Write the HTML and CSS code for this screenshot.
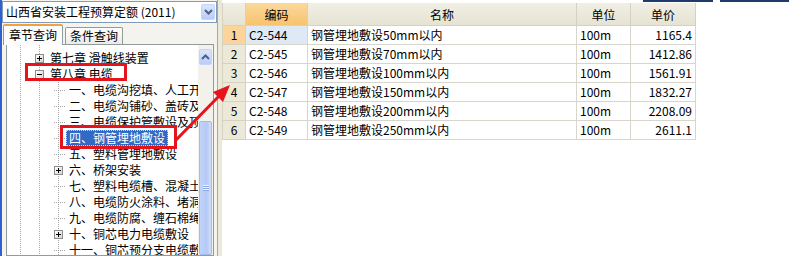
FILE: index.html
```html
<!DOCTYPE html>
<html lang="zh-CN">
<head>
    <meta charset="UTF-8">
    <title>定额查询</title>
    <link rel="stylesheet" href="styles.css">
</head>
<body>
    <div class="app">
        <!-- 左侧：定额库 + 章节树 -->
        <div class="left">
            <div class="combo">
                <span class="combo-text">山西省安装工程预算定额 (2011)</span>
                <span class="combo-btn">
                    <svg width="9" height="6" viewBox="0 0 9 6"><path d="M1 1 L4.5 4.5 L8 1" fill="none" stroke="#4d6185" stroke-width="2"/></svg>
                </span>
            </div>

            <div class="tabs">
                <div class="tab active">章节查询</div>
                <div class="tab">条件查询</div>
            </div>

            <div class="tree-box">
                <div class="tree">
                    <div class="node lv1"><span class="exp plus"></span><span class="label">第七章 滑触线装置</span></div>
                    <div class="node lv1"><span class="exp minus"></span><span class="label">第八章 电缆</span></div>
                    <div class="children">
                        <div class="node lv2"><span class="stub"></span><span class="label">一、电缆沟挖填、人工开挖路面</span></div>
                        <div class="node lv2"><span class="stub"></span><span class="label">二、电缆沟铺砂、盖砖及移动盖板</span></div>
                        <div class="node lv2"><span class="stub"></span><span class="label">三、电缆保护管敷设及顶管</span></div>
                        <div class="node lv2"><span class="stub"></span><span class="label selected">四、钢管埋地敷设</span></div>
                        <div class="node lv2"><span class="stub"></span><span class="label">五、塑料管埋地敷设</span></div>
                        <div class="node lv2"><span class="exp plus"></span><span class="label">六、桥架安装</span></div>
                        <div class="node lv2"><span class="stub"></span><span class="label">七、塑料电缆槽、混凝土电缆槽安装</span></div>
                        <div class="node lv2"><span class="stub"></span><span class="label">八、电缆防火涂料、堵洞</span></div>
                        <div class="node lv2"><span class="stub"></span><span class="label">九、电缆防腐、缠石棉绳</span></div>
                        <div class="node lv2"><span class="exp plus"></span><span class="label">十、铜芯电力电缆敷设</span></div>
                        <div class="node lv2"><span class="stub"></span><span class="label">十一、铜芯预分支电缆敷设</span></div>
                    </div>
                </div>
                <div class="vscroll">
                    <span class="sb-up">
                        <svg width="9" height="6" viewBox="0 0 9 6"><path d="M1 5 L4.5 1.5 L8 5" fill="none" stroke="#4d6185" stroke-width="2"/></svg>
                    </span>
                    <span class="sb-track"></span>
                    <span class="sb-thumb"><span class="grip"></span></span>
                </div>
            </div>
        </div>

        <div class="splitter"></div>

        <!-- 右侧：定额子目 -->
        <div class="main">
            <div class="top-edge">
                <span class="edge-a"></span>
                <span class="edge-b"></span>
            </div>
            <table class="grid">
                <colgroup>
                    <col class="c-no"><col class="c-code"><col class="c-name"><col class="c-unit"><col class="c-price">
                </colgroup>
                <thead>
                    <tr>
                        <th></th>
                        <th class="hot">编码</th>
                        <th>名称</th>
                        <th>单位</th>
                        <th>单价</th>
                    </tr>
                </thead>
                <tbody>
                    <tr><td class="no hot">1</td><td class="cur">C2-544</td><td>钢管埋地敷设50mm以内</td><td>100m</td><td class="num">1165.4</td></tr>
                    <tr><td class="no">2</td><td>C2-545</td><td>钢管埋地敷设70mm以内</td><td>100m</td><td class="num">1412.86</td></tr>
                    <tr><td class="no">3</td><td>C2-546</td><td>钢管埋地敷设100mm以内</td><td>100m</td><td class="num">1561.91</td></tr>
                    <tr><td class="no">4</td><td>C2-547</td><td>钢管埋地敷设150mm以内</td><td>100m</td><td class="num">1832.27</td></tr>
                    <tr><td class="no">5</td><td>C2-548</td><td>钢管埋地敷设200mm以内</td><td>100m</td><td class="num">2208.09</td></tr>
                    <tr><td class="no">6</td><td>C2-549</td><td>钢管埋地敷设250mm以内</td><td>100m</td><td class="num">2611.1</td></tr>
                </tbody>
            </table>
        </div>

        <!-- 标注：红框和箭头 -->
        <div class="mark mark-chapter"></div>
        <div class="mark mark-item"></div>
        <svg class="arrow" width="789" height="256" viewBox="0 0 789 256">
            <line x1="176" y1="140" x2="222" y2="93" stroke="#e5131c" stroke-width="3"/>
            <polygon points="230,85 213,92 223,102" fill="#e5131c"/>
        </svg>
    </div>
</body>
</html>
```

FILE: styles.css
```css
body {
    margin: 0;
    font-family: "Noto Sans CJK SC", "Liberation Sans", sans-serif;
    font-size: 12px;
    color: #000;
    background: #fff;
}

.app {
    position: relative;
    display: flex;
    width: 789px;
    height: 256px;
    overflow: hidden;
}

/* ---------- 左侧 ---------- */

.left {
    width: 215px;
    border-left: 2px solid #2f5fd0;
    background: #f4f3ee;
    display: flex;
    flex-direction: column;
}

.combo {
    height: 20px;
    margin-top: 1px;
    border: 1px solid #7f9db9;
    background: #fff;
    display: flex;
    align-items: center;
    justify-content: space-between;
    padding-left: 3px;
}

.combo-text {
    line-height: 16px;
    white-space: nowrap;
}

.combo-btn,
.sb-up {
    width: 14px;
    height: 16px;
    margin-right: 1px;
    border: 1px solid #c3d3fd;
    border-radius: 2px;
    background: linear-gradient(#dbe6fd, #b9cdf8);
    display: flex;
    align-items: center;
    justify-content: center;
    box-sizing: border-box;
}

.tabs {
    height: 21px;
    display: flex;
    align-items: flex-end;
    padding-left: 1px;
}

.tab {
    height: 16px;
    line-height: 16px;
    padding: 0 4px;
    margin-right: 2px;
    border: 1px solid #919b9c;
    border-bottom: none;
    border-radius: 2px 2px 0 0;
    background: linear-gradient(#ffffff, #ecebe5);
}

.tab.active {
    height: 19px;
    line-height: 18px;
    padding: 0 5px;
    border-top: 2px solid #f0a33c;
    background: #fcfcfe;
    position: relative;
    top: 1px;
}

.tree-box {
    flex: 1;
    margin: 0 3px 0 4px;
    border: 1px solid #919b9c;
    background: #fff;
    display: flex;
    overflow: hidden;
}

.tree {
    flex: 1;
    min-width: 0;
    padding-top: 5px;
    overflow: hidden;
    white-space: nowrap;
    background:
        linear-gradient(#a6a6a6 50%, transparent 50%) 13px 0 / 1px 2px repeat-y,
        linear-gradient(#a6a6a6 50%, transparent 50%) 32px 0 / 1px 2px repeat-y;
}

.children {
    background: linear-gradient(#a6a6a6 50%, transparent 50%) 51px 0 / 1px 2px repeat-y;
}

.node {
    height: 16px;
    display: flex;
    align-items: center;
    overflow: hidden;
}

.lv1 { padding-left: 28px; }
.lv2 { padding-left: 47px; }

.exp {
    width: 9px;
    height: 9px;
    border: 1px solid #8c8c8c;
    background: linear-gradient(135deg, #ffffff, #d9d6cb);
    box-sizing: border-box;
    margin-right: 3px;
    position: relative;
    flex: none;
}

.exp::before {
    content: "";
    position: absolute;
    left: 1px;
    top: 3px;
    width: 5px;
    height: 1px;
    background: #000;
}

.exp.plus::after {
    content: "";
    position: absolute;
    left: 3px;
    top: 1px;
    width: 1px;
    height: 5px;
    background: #000;
}

.stub {
    width: 12px;
    height: 1px;
    flex: none;
    background: linear-gradient(90deg, #a6a6a6 50%, transparent 50%) 4px 0 / 2px 1px repeat-x;
}

.label {
    padding: 0 3px;
    line-height: 16px;
    overflow: hidden;
    min-width: 0;
}

.label.selected {
    background: #316ac5;
    color: #fff;
    outline: 1px dotted #c7d4ec;
    outline-offset: -1px;
}

.vscroll {
    width: 15px;
    flex: none;
    display: flex;
    flex-direction: column;
    background: #f3f1ec;
    padding-top: 4px;
    box-sizing: border-box;
}

.sb-up {
    width: 13px;
    height: 16px;
    margin-left: 1px;
}

.sb-track {
    height: 56px;
}

.sb-thumb {
    flex: 1;
    margin: 0 1px 0 1px;
    border: 1px solid #a3bbf0;
    border-radius: 2px;
    background: linear-gradient(90deg, #c2d4fa, #b5c9f6 60%, #d2def9);
    display: flex;
    justify-content: center;
    padding-top: 63px;
}

.grip {
    width: 6px;
    height: 6px;
    background: repeating-linear-gradient(#eef3fe 0 1px, #8aa6e8 1px 2px);
}

.splitter {
    width: 4px;
    background: #ece9d8;
    border-left: 1px solid #aca899;
}

/* ---------- 右侧表格 ---------- */

.main {
    flex: 1;
    background: #fff;
}

.top-edge {
    height: 3px;
    display: flex;
    padding-left: 421px;
}

.edge-a,
.edge-b {
    height: 2px;
    background: #1f3a6b;
}

.edge-a { width: 70px; margin-right: 7px; }
.edge-b { flex: 1; }

.grid {
    border-collapse: collapse;
    table-layout: fixed;
    width: 473px;
}

.c-no { width: 23px; }
.c-code { width: 62px; }
.c-name { width: 269px; }
.c-unit { width: 54px; }
.c-price { width: 65px; }

.grid th {
    height: 22px;
    padding: 0;
    font-weight: normal;
    background: linear-gradient(#f1efe4, #e6e3d3);
    border: 1px solid #d6d2c2;
    border-top: none;
    text-align: center;
}

.grid th.hot {
    background: linear-gradient(#fbd89b, #f7c36e);
}

.grid td {
    height: 18px;
    padding: 0 3px;
    line-height: 16px;
    border: 1px solid #d8d6cc;
    white-space: nowrap;
    overflow: hidden;
}

.grid td.no {
    padding: 0;
    text-align: center;
    background: #ece9d8;
    border-color: #d6d2c2;
}

.grid td.no.hot {
    background: #fad49a;
}

.grid td.cur {
    background: #dfe8f5;
}

.grid td.num {
    text-align: right;
}

/* ---------- 标注 ---------- */

.mark {
    position: absolute;
    border: 3px solid #e5131c;
    box-sizing: border-box;
}

.mark-chapter {
    left: 25px;
    top: 63px;
    width: 102px;
    height: 18px;
}

.mark-item {
    left: 60px;
    top: 125px;
    width: 117px;
    height: 24px;
}

.arrow {
    position: absolute;
    left: 0;
    top: 0;
    pointer-events: none;
}
```
